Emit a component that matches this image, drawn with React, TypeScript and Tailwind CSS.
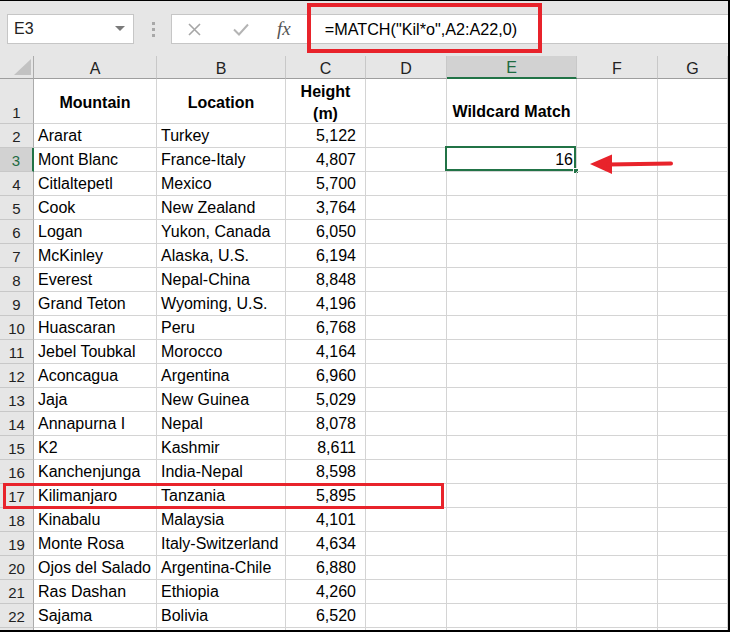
const data = [
  ["Ararat", "Turkey", "5,122"],
  ["Mont Blanc", "France-Italy", "4,807"],
  ["Citlaltepetl", "Mexico", "5,700"],
  ["Cook", "New Zealand", "3,764"],
  ["Logan", "Yukon, Canada", "6,050"],
  ["McKinley", "Alaska, U.S.", "6,194"],
  ["Everest", "Nepal-China", "8,848"],
  ["Grand Teton", "Wyoming, U.S.", "4,196"],
  ["Huascaran", "Peru", "6,768"],
  ["Jebel Toubkal", "Morocco", "4,164"],
  ["Aconcagua", "Argentina", "6,960"],
  ["Jaja", "New Guinea", "5,029"],
  ["Annapurna I", "Nepal", "8,078"],
  ["K2", "Kashmir", "8,611"],
  ["Kanchenjunga", "India-Nepal", "8,598"],
  ["Kilimanjaro", "Tanzania", "5,895"],
  ["Kinabalu", "Malaysia", "4,101"],
  ["Monte Rosa", "Italy-Switzerland", "4,634"],
  ["Ojos del Salado", "Argentina-Chile", "6,880"],
  ["Ras Dashan", "Ethiopia", "4,260"],
  ["Sajama", "Bolivia", "6,520"],
];

const columns = ["A", "B", "C", "D", "E", "F", "G"];

function RowHeader({ n, active }: { n?: string; active?: boolean }) {
  return (
    <div
      className={
        active
          ? "flex items-end justify-center border-b border-r-2 border-b-[#c8c8c8] border-r-[#217346] bg-[#d2d2d2] pb-[2px] text-[15px] leading-[17px] text-[#1e6b41]"
          : "flex items-end justify-center border-b border-r border-b-[#c8c8c8] border-r-[#ababab] bg-[#e6e6e6] pb-[2px] text-[15px] leading-[17px] text-[#222]"
      }
    >
      {n}
    </div>
  );
}

function Cell({
  children,
  className = "items-end pb-[2px]",
}: {
  children?: React.ReactNode;
  className?: string;
}) {
  return (
    <div className={`relative flex whitespace-nowrap border-b border-r border-[#d4d4d4] text-[16px] leading-[18px] text-black ${className}`}>
      {children}
    </div>
  );
}

export default function App() {
  return (
    <div className="relative h-[632px] w-[730px] overflow-hidden border-t border-r-2 border-b-2 border-black bg-white font-['Liberation_Sans',Arial,sans-serif]">
      {/* formula bar */}
      <div className="flex h-[55px] items-start bg-[#e6e6e6] pl-[7px] pt-[13px]">
        <div className="flex h-[30px] w-[127px] items-center justify-between border border-[#c6c6c6] bg-white pl-[6px] pr-[8px] text-[16px] text-[#222]">
          <span>E3</span>
          <svg width="10" height="6" viewBox="0 0 10 6">
            <path d="M0 0 H10 L5 5 Z" fill="#7a7a7a" />
          </svg>
        </div>
        <div className="ml-[18px] mt-[8px] flex flex-col gap-[3px]">
          <span className="h-[3px] w-[3px] bg-[#a8a8a8]" />
          <span className="h-[3px] w-[3px] bg-[#a8a8a8]" />
          <span className="h-[3px] w-[3px] bg-[#a8a8a8]" />
        </div>
        <div className="ml-[16px] flex h-[30px] flex-1 items-center border border-r-0 border-[#c6c6c6] bg-white">
          <svg className="ml-[16px]" width="13" height="13" viewBox="0 0 13 13">
            <path d="M1 1 L12 12 M12 1 L1 12" stroke="#a6a6a6" strokeWidth="1.6" />
          </svg>
          <svg className="ml-[32px]" width="16" height="13" viewBox="0 0 16 13">
            <path d="M1 6.5 L6 11.5 L15 1.5" stroke="#b4b4b4" strokeWidth="2" fill="none" />
          </svg>
          <span className="ml-[28px] font-['Liberation_Serif',serif] text-[19px] italic text-[#555]">
            fx
          </span>
          <span className="ml-[34px] text-[16.2px] text-black">=MATCH("Kil*o",A2:A22,0)</span>
        </div>
      </div>

      {/* sheet grid */}
      <div className="grid grid-cols-[34px_123px_129px_80px_81px_130px_81px_70px] grid-rows-[23px_45px_repeat(22,24px)]">
        <div className="relative border-b border-r border-b-[#9e9e9e] border-r-[#ababab] bg-[#e6e6e6]">
          <svg className="absolute bottom-[3px] right-[2px]" width="17" height="16" viewBox="0 0 17 16">
            <path d="M17 0 L17 16 L0 16 Z" fill="#c2c2c2" />
          </svg>
        </div>
        {columns.map((c) =>
          c === "E" ? (
            <div
              key={c}
              className="flex items-center justify-center border-b-2 border-r border-b-[#217346] border-r-[#c8c8c8] bg-[#d2d2d2] pt-[3px] text-[16px] text-[#1e6b41]"
            >
              {c}
            </div>
          ) : (
            <div
              key={c}
              className="flex items-center justify-center border-b border-r border-b-[#9e9e9e] border-r-[#c8c8c8] bg-[#e6e6e6] pt-[3px] text-[16px] text-[#222]"
            >
              {c}
            </div>
          )
        )}

        {/* row 1 */}
        <RowHeader n="1" />
        <Cell className="items-center justify-center pt-[3px] font-bold">Mountain</Cell>
        <Cell className="items-center justify-center pt-[3px] font-bold">Location</Cell>
        <Cell className="items-center justify-center pt-[3px] text-center font-bold leading-[22px]">
          Height
          <br />
          (m)
        </Cell>
        <Cell />
        <Cell className="items-end justify-center pb-[2px] font-bold">Wildcard Match</Cell>
        <Cell />
        <Cell />

        {data.map((r, i) => {
          const n = i + 2;
          return [
            <RowHeader key={`h${n}`} n={String(n)} active={n === 3} />,
            <Cell key={`a${n}`} className="items-end pb-[2px] pl-[4px]">{r[0]}</Cell>,
            <Cell key={`b${n}`} className="items-end pb-[2px] pl-[4px]">{r[1]}</Cell>,
            <Cell key={`c${n}`} className="items-end justify-end pb-[2px] pr-[9px]">{r[2]}</Cell>,
            <Cell key={`d${n}`} />,
            n === 3 ? (
              <Cell key={`e${n}`} className="items-end justify-end pb-[2px] pr-[3px]">
                16
                <div className="absolute -left-[2px] -top-[2px] bottom-0 right-0 border-2 border-[#217346]" />
                <div className="absolute -bottom-[3px] -right-[3px] h-[6px] w-[6px] border border-white bg-[#217346]" />
              </Cell>
            ) : (
              <Cell key={`e${n}`} />
            ),
            <Cell key={`f${n}`} />,
            <Cell key={`g${n}`} />,
          ];
        })}

        <RowHeader />
        <Cell />
        <Cell />
        <Cell />
        <Cell />
        <Cell />
        <Cell />
        <Cell />
      </div>

      {/* annotations */}
      <div className="absolute left-[307px] top-[2px] h-[50px] w-[235px] border-4 border-[#e8232b]" />
      <div className="absolute left-[3px] top-[482px] h-[26px] w-[441px] border-[3px] border-[#e8232b]" />
      <svg className="absolute left-[588px] top-[152px]" width="88" height="24" viewBox="0 0 88 24">
        <path d="M2 11 L24 1.5 L24 21 Z" fill="#e8232b" />
        <path d="M20 11.5 L83 10.5" stroke="#e8232b" strokeWidth="4" strokeLinecap="round" />
      </svg>
    </div>
  );
}
